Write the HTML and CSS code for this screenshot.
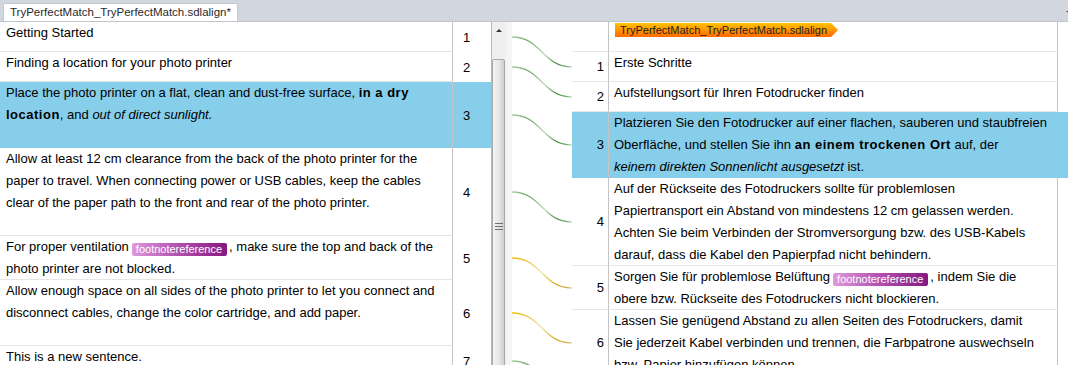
FILE: index.html
```html
<!DOCTYPE html>
<html>
<head>
<meta charset="utf-8">
<link rel="stylesheet" href="styles.css">
</head>
<body>
<div class="app">
  <div class="tabbar">
    <div class="tab">TryPerfectMatch_TryPerfectMatch.sdlalign*</div>
    <span class="tabmenu">-</span>
  </div>
  <div class="main">
    <div class="lpane">
      <div class="lrow h30"><div class="ltext">Getting Started</div><div class="lnum">1</div></div>
      <div class="lrow h30"><div class="ltext">Finding a location for your photo printer</div><div class="lnum">2</div></div>
      <div class="lrow h66 sel"><div class="ltext">Place the photo printer on a flat, clean and dust-free surface, <b>in a dry<br>location</b>, and <i>out of direct sunlight.</i></div><div class="lnum">3</div></div>
      <div class="lrow h88"><div class="ltext">Allow at least 12 cm clearance from the back of the photo printer for the<br>paper to travel. When connecting power or USB cables, keep the cables<br>clear of the paper path to the front and rear of the photo printer.</div><div class="lnum">4</div></div>
      <div class="lrow h44"><div class="ltext">For proper ventilation<span class="pill">footnotereference</span>, make sure the top and back of the<br>photo printer are not blocked.</div><div class="lnum">5</div></div>
      <div class="lrow h66"><div class="ltext">Allow enough space on all sides of the photo printer to let you connect and<br>disconnect cables, change the color cartridge, and add paper.</div><div class="lnum">6</div></div>
      <div class="lrow h30"><div class="ltext">This is a new sentence.</div><div class="lnum">7</div></div>
    </div>
    <div class="vscroll">
      <div class="sbtn"><span class="arrow"></span></div>
      <div class="thumb"><div class="grip"><i></i><i></i><i></i></div></div>
    </div>
    <div class="strip"></div>
    <div class="links">
      <svg width="60" height="343" viewBox="0 0 60 343">
        <defs>
          <linearGradient id="g" x1="0" y1="0" x2="60" y2="0" gradientUnits="userSpaceOnUse">
            <stop offset="0" stop-color="#a9cda3"/>
            <stop offset="0.3" stop-color="#6fa865"/>
            <stop offset="0.55" stop-color="#c3dbbf"/>
            <stop offset="0.75" stop-color="#3c8835"/>
            <stop offset="0.88" stop-color="#5a9a53"/>
            <stop offset="1" stop-color="#cfe3cb"/>
          </linearGradient>
          <linearGradient id="y" x1="0" y1="0" x2="60" y2="0" gradientUnits="userSpaceOnUse">
            <stop offset="0" stop-color="#f2c200"/>
            <stop offset="0.3" stop-color="#ecc850"/>
            <stop offset="0.5" stop-color="#f3e2a8"/>
            <stop offset="0.75" stop-color="#d2a000"/>
            <stop offset="0.9" stop-color="#cca23c"/>
            <stop offset="1" stop-color="#e8d8a8"/>
          </linearGradient>
        </defs>
        <g fill="none" stroke-width="1.3">
          <path d="M0,15 C30,15 30,45 60,45" stroke="url(#g)"/>
          <path d="M0,45 C30,45 30,75 60,75" stroke="url(#g)"/>
          <path d="M0,93 C30,93 30,123 60,123" stroke="url(#g)"/>
          <path d="M0,170 C30,170 30,200 60,200" stroke="url(#g)"/>
          <path d="M0,236 C30,236 30,266 60,266" stroke="url(#y)"/>
          <path d="M0,291 C30,291 30,321 60,321" stroke="url(#y)"/>
          <path d="M0,339 C30,339 30,369 60,369" stroke="url(#g)"/>
        </g>
      </svg>
    </div>
    <div class="rpane">
      <div class="rrow h30"><div class="rnum"></div><div class="rtext"><span class="tag">TryPerfectMatch_TryPerfectMatch.sdlalign</span></div><div class="rfill"></div></div>
      <div class="rrow h30"><div class="rnum">1</div><div class="rtext">Erste Schritte</div><div class="rfill"></div></div>
      <div class="rrow h30"><div class="rnum">2</div><div class="rtext">Aufstellungsort für Ihren Fotodrucker finden</div><div class="rfill"></div></div>
      <div class="rrow h66 sel"><div class="rnum">3</div><div class="rtext">Platzieren Sie den Fotodrucker auf einer flachen, sauberen und staubfreien<br>Oberfläche, und stellen Sie ihn <b>an einem trockenen Ort</b> auf, der<br><i>keinem direkten Sonnenlicht ausgesetzt</i> ist.</div><div class="rfill"></div></div>
      <div class="rrow h88"><div class="rnum">4</div><div class="rtext">Auf der Rückseite des Fotodruckers sollte für problemlosen<br>Papiertransport ein Abstand von mindestens 12 cm gelassen werden.<br>Achten Sie beim Verbinden der Stromversorgung bzw. des USB-Kabels<br>darauf, dass die Kabel den Papierpfad nicht behindern.</div><div class="rfill"></div></div>
      <div class="rrow h44"><div class="rnum">5</div><div class="rtext">Sorgen Sie für problemlose Belüftung<span class="pill">footnotereference</span>, indem Sie die<br>obere bzw. Rückseite des Fotodruckers nicht blockieren.</div><div class="rfill"></div></div>
      <div class="rrow h66"><div class="rnum">6</div><div class="rtext">Lassen Sie genügend Abstand zu allen Seiten des Fotodruckers, damit<br>Sie jederzeit Kabel verbinden und trennen, die Farbpatrone auswechseln<br>bzw. Papier hinzufügen können.</div><div class="rfill"></div></div>
    </div>
  </div>
</div>
</body>
</html>
```

FILE: styles.css
```css
* { box-sizing: border-box; }
html, body { margin: 0; padding: 0; }
body {
  width: 1068px;
  height: 365px;
  overflow: hidden;
  background: #fff;
  font-family: "Liberation Sans", Arial, sans-serif;
  font-size: 13px;
  color: #000;
}
b { letter-spacing: 0.5px; }
.app { width: 1068px; height: 365px; display: flex; flex-direction: column; }
.tabbar {
  height: 22px;
  flex: none;
  background: #d2d6de;
  border-bottom: 1px solid #c0c4cb;
  display: flex;
  align-items: flex-end;
  padding-left: 3px;
}
.tab {
  height: 19px;
  margin-bottom: -1px;
  background: #fff;
  border: 1px solid #c3c7ce;
  border-bottom: 1px solid #c0c4cb;
  border-radius: 2px 2px 0 0;
  padding: 0 6px;
  font-size: 11.5px;
  line-height: 17px;
  color: #2a2a2a;
  width: 235px;
  white-space: nowrap;
}
.tabmenu {
  margin-left: auto;
  align-self: flex-start;
  margin-top: 4px;
  font-size: 12px;
  color: #444;
  line-height: 14px;
  margin-right: -2px;
}
.main { flex: 1; display: flex; overflow: hidden; }

.lpane { width: 491px; flex: none; }
.lrow { display: flex; }
.ltext {
  width: 453px;
  flex: none;
  padding-left: 6px;
  padding-right: 4px;
  border-right: 1px solid #c4c4c4;
  border-bottom: 1px solid #e6e6e6;
  line-height: 22px;
}
.lnum {
  flex: 1;
  display: flex;
  align-items: center;
  padding-left: 10px;
}
.h30 { height: 30px; }
.h44 { height: 44px; }
.h66 { height: 66px; }
.h88 { height: 88px; }
.sel .ltext, .sel .lnum { background: #87ceeb; }
.sel .ltext { border-bottom-color: #87ceeb; }

.vscroll {
  width: 15px;
  flex: none;
  background: #efefef;
  border-left: 1px solid #b9b9b9;
  display: flex;
  flex-direction: column;
}
.sbtn { height: 37px; flex: none; display: flex; justify-content: center; padding-top: 7px; }
.arrow {
  width: 0; height: 0;
  border-left: 3px solid transparent;
  border-right: 3px solid transparent;
  border-bottom: 3px solid #333;
}
.thumb {
  height: 330px;
  flex: none;
  margin: 0 1px 0 0;
  border: 1px solid #a8a8a8;
  border-radius: 2px;
  background: linear-gradient(to right, #f4f4f4, #e4e4e4 60%, #cfcfcf);
  padding-top: 163px;
}
.grip { display: flex; flex-direction: column; gap: 2px; padding-left: 2px; }
.grip i { display: block; width: 8px; height: 1px; background: #6f6f6f; }

.strip { width: 6px; flex: none; background: #f5f5f5; }
.links { width: 60px; flex: none; }
.links svg { display: block; }

.rpane { flex: 1; }
.rrow { display: flex; }
.rnum {
  width: 37px;
  flex: none;
  border-right: 1px solid #c4c4c4;
  border-bottom: 1px solid #e6e6e6;
  display: flex;
  align-items: center;
  justify-content: flex-end;
  padding-right: 4px;
}
.rtext {
  width: 449px;
  flex: none;
  padding-left: 5px;
  padding-right: 2px;
  border-right: 1px solid #c4c4c4;
  border-bottom: 1px solid #e6e6e6;
  line-height: 22px;
}
.rfill { flex: 1; }
.sel .rnum, .sel .rtext, .sel .rfill { background: #87ceeb; }
.sel .rnum, .sel .rtext { border-bottom-color: #87ceeb; }
.sel .rtext { border-right-color: #87ceeb; }

.tag {
  display: inline-block;
  margin-left: 1px;
  margin-top: 1px;
  height: 14px;
  padding: 0 11px 0 5px;
  font-size: 11px;
  line-height: 14px;
  color: #1e1e1e;
  white-space: nowrap;
  vertical-align: top;
  background: linear-gradient(to bottom, #ffc400 0%, #ff9a00 45%, #ff6a00 100%);
  clip-path: polygon(0 0, calc(100% - 7px) 0, 100% 50%, calc(100% - 7px) 100%, 0 100%);
}

.pill {
  display: inline-block;
  height: 13px;
  line-height: 13px;
  font-size: 11px;
  letter-spacing: 0;
  color: #fff;
  padding: 0 5px 0 4px;
  margin: 0 2px 0 3px;
  border-radius: 2px;
  vertical-align: -2px;
  background: linear-gradient(to right, #de98dc, #b14eae 50%, #86187f);
}
```
